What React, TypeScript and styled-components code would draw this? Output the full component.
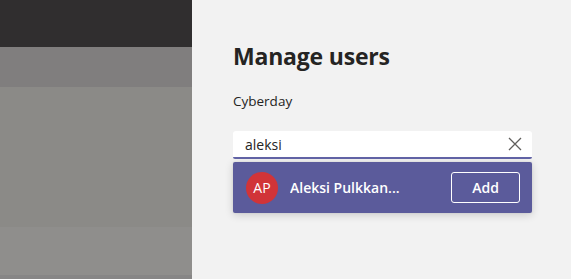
import React from "react";
import styled, { createGlobalStyle } from "styled-components";

const GlobalStyle = createGlobalStyle`
  html, body {
    margin: 0;
    padding: 0;
    width: 571px;
    height: 279px;
    overflow: hidden;
    font-family: "Open Sans", "Noto Sans", sans-serif;
  }
`;

function ClearIcon() {
  return (
    <svg width="14" height="14" viewBox="0 0 14 14">
      <path d="M1 1L13 13M13 1L1 13" stroke="#605e5c" strokeWidth="1.3" fill="none" />
    </svg>
  );
}

export default function App() {
  return (
    <>
      <GlobalStyle />
      <Screen>
        <Backdrop>
          <Band tone="#302e2f" h={47} />
          <Band tone="#807e7e" h={40} />
          <Band tone="#8b8a87" h={140} />
          <Band tone="#8f8e8c" h={48} />
          <Band tone="#878686" h={4} />
        </Backdrop>
        <Panel>
          <Title>Manage users</Title>
          <TeamName>Cyberday</TeamName>
          <SearchWrap>
            <SearchBox>
              <SearchText>aleksi</SearchText>
              <ClearButton>
                <ClearIcon />
              </ClearButton>
            </SearchBox>
            <Results>
              <ResultRow>
                <Avatar>AP</Avatar>
                <UserName title="Aleksi Pulkkanen">Aleksi Pulkkan...</UserName>
                <AddButton>Add</AddButton>
              </ResultRow>
            </Results>
          </SearchWrap>
        </Panel>
      </Screen>
    </>
  );
}

const Screen = styled.div`
  display: flex;
  width: 571px;
  height: 279px;
`;

const Backdrop = styled.div`
  width: 192px;
  display: flex;
  flex-direction: column;
  box-shadow: inset -3px 0 3px -2px rgba(0, 0, 0, 0.12);
`;

const Band = styled.div<{ tone: string; h: number }>`
  flex: 0 0 ${({ h }) => h}px;
  background: ${({ tone }) => tone};
`;

const Panel = styled.div`
  flex: 1;
  background: #f2f2f2;
  padding: 40px 39px 0 41px;
  display: flex;
  flex-direction: column;
`;

const Title = styled.h1`
  margin: 0;
  font-size: 23px;
  line-height: 32px;
  font-weight: 700;
  color: #252423;
  letter-spacing: -0.2px;
`;

const TeamName = styled.div`
  margin-top: 19px;
  font-size: 13.5px;
  line-height: 20px;
  color: #252423;
`;

const SearchWrap = styled.div`
  margin-top: 20px;
  display: flex;
  flex-direction: column;
  gap: 3px;
`;

const SearchBox = styled.div`
  height: 28px;
  box-sizing: border-box;
  background: #fff;
  border-radius: 3px 3px 2px 2px;
  border-bottom: 2px solid #6264a7;
  display: flex;
  align-items: center;
  padding: 0 10px 0 12px;
`;

const SearchText = styled.span`
  flex: 1;
  font-size: 14px;
  color: #252423;
`;

const ClearButton = styled.span`
  display: flex;
  align-items: center;
`;

const Results = styled.div`
  background: #5b5b9b;
  box-shadow: 0 2px 8px rgba(0, 0, 0, 0.16), 0 0 2px rgba(0, 0, 0, 0.1);
  border-radius: 2px;
`;

const ResultRow = styled.div`
  height: 51px;
  display: flex;
  align-items: center;
  padding: 0 12px 0 13px;
  gap: 12px;
`;

const Avatar = styled.div`
  width: 32px;
  height: 32px;
  border-radius: 50%;
  background: #d13438;
  color: #fff;
  font-size: 14px;
  display: flex;
  align-items: center;
  justify-content: center;
  flex: none;
`;

const UserName = styled.div`
  flex: 1;
  min-width: 0;
  color: #fff;
  font-size: 14px;
  font-weight: 600;
  white-space: nowrap;
  overflow: hidden;
  text-overflow: ellipsis;
`;

const AddButton = styled.button`
  flex: none;
  width: 69px;
  height: 31px;
  background: transparent;
  border: 1px solid #fff;
  border-radius: 3px;
  color: #fff;
  font-family: inherit;
  font-size: 14px;
  font-weight: 600;
  padding: 0;
`;
